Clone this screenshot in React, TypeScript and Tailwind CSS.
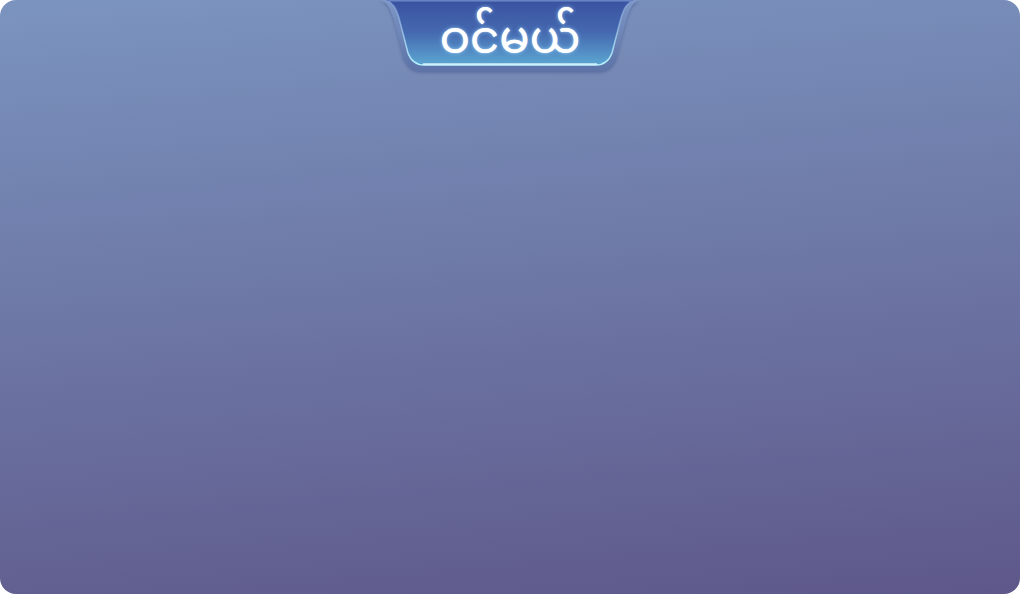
import React from "react";

function LoginTab() {
  return (
    <div className="absolute left-1/2 top-0 w-[270px] h-[76px] -translate-x-1/2">
      <svg width="270" height="76" viewBox="0 0 270 76" className="absolute inset-0">
        <defs>
          <linearGradient id="rim" x1="0" y1="0" x2="0" y2="1">
            <stop offset="0" stopColor="#7d97c6" />
            <stop offset="1" stopColor="#5d73a8" />
          </linearGradient>
          <linearGradient id="face" x1="0" y1="0" x2="0" y2="1">
            <stop offset="0" stopColor="#3a52a0" />
            <stop offset="0.5" stopColor="#4569b0" />
            <stop offset="1" stopColor="#5ca6d2" />
          </linearGradient>
          <linearGradient id="edge" x1="0" y1="0" x2="0" y2="1">
            <stop offset="0" stopColor="#9ab6e6" stopOpacity="0.4" />
            <stop offset="1" stopColor="#b8f2ff" />
          </linearGradient>
          <filter id="shadow" x="-10%" y="-10%" width="120%" height="130%">
            <feDropShadow dx="0" dy="2" stdDeviation="1.5" floodColor="#3d4a80" floodOpacity="0.45" />
          </filter>
        </defs>
        <path
          d="M3,0 L267,0 C258,0 255,8 251,20 L242,56 C239,66 233,71 223,71 L47,71 C37,71 31,66 28,56 L19,20 C15,8 12,0 3,0 Z"
          fill="url(#rim)"
          filter="url(#shadow)"
        />
        <path
          d="M10,0 L260,0 C252,2 249,8 246,18 L237,53 C234,61 229,65 221,65 L49,65 C41,65 36,61 33,53 L24,18 C21,8 18,2 10,0 Z"
          fill="url(#face)"
          stroke="url(#edge)"
          strokeWidth="1.5"
        />
        <line x1="48" y1="64" x2="222" y2="64" stroke="#e6fbff" strokeWidth="1.5" strokeOpacity="0.85" />
        <line x1="14" y1="1" x2="256" y2="1" stroke="#8fb0e8" strokeWidth="1" strokeOpacity="0.6" />
      </svg>
      <div className="absolute inset-x-0 top-[11px] flex justify-center">
        <span
          className="text-white text-[45px] leading-[64px] [text-shadow:0_0_1px_#fff,0_0_4px_rgba(150,210,255,0.8)]"
          style={{ fontFamily: '"Noto Sans Myanmar", "Padauk", "Myanmar Text", "Noto Sans", sans-serif' }}
        >
          ဝင်မယ်
        </span>
      </div>
    </div>
  );
}

export default function App() {
  return (
    <div className="w-[1020px] h-[594px] bg-white">
      <div className="relative w-full h-full rounded-2xl bg-linear-[175deg] from-[#7b94bf] to-[#5e588a]">
        <LoginTab />
      </div>
    </div>
  );
}
